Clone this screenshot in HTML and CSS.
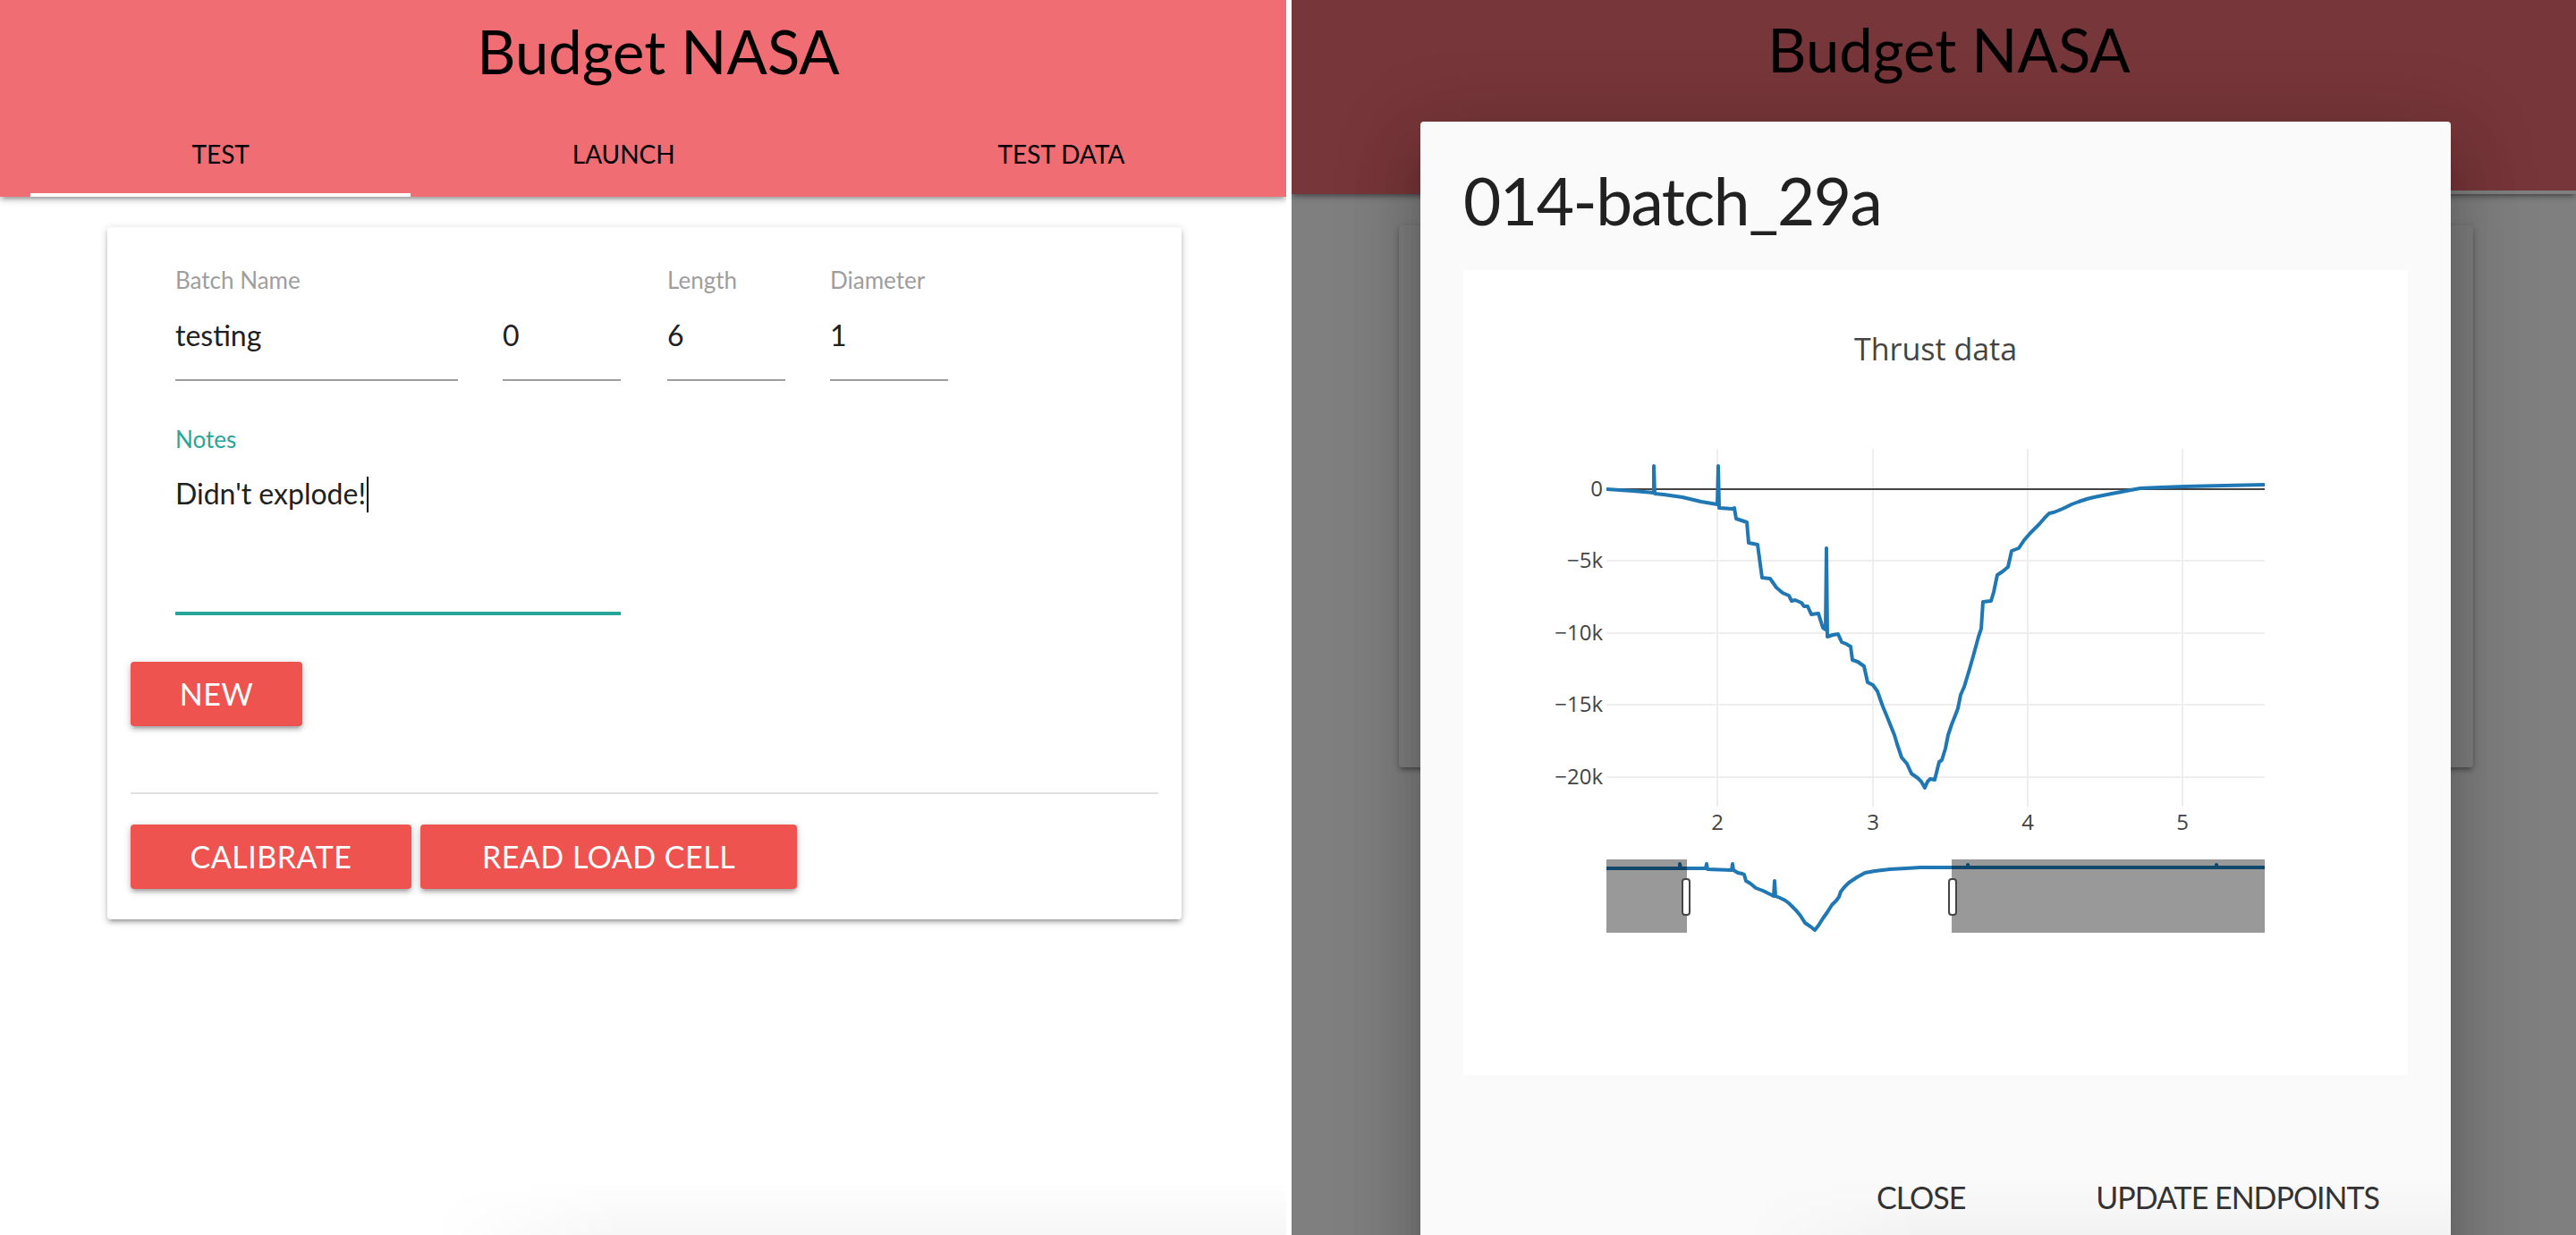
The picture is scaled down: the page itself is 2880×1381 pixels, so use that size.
FILE: index.html
```html
<!DOCTYPE html>
<html lang="en">
<head>
<meta charset="utf-8">
<title>Budget NASA</title>
<link rel="stylesheet" href="styles.css">
</head>
<body>
<div class="screens">
  <section class="panel panel-left">
    <header class="nav">
      <h1 class="brand">Budget NASA</h1>
      <ul class="tabs">
        <li class="tab active">TEST</li>
        <li class="tab">LAUNCH</li>
        <li class="tab">TEST DATA</li>
      </ul>
    </header>
    <main class="content">
      <div class="card">
        <div class="fields">
          <div class="field field-wide">
            <span class="field-label">Batch Name</span>
            <div class="field-input">testing</div>
          </div>
          <div class="field field-num">
            <span class="field-label">&nbsp;</span>
            <div class="field-input">0</div>
          </div>
          <div class="field field-num field-len">
            <span class="field-label">Length</span>
            <div class="field-input">6</div>
          </div>
          <div class="field field-num">
            <span class="field-label">Diameter</span>
            <div class="field-input">1</div>
          </div>
        </div>
        <div class="notes">
          <span class="field-label label-active">Notes</span>
          <div class="textarea">Didn't explode!<span class="caret"></span></div>
        </div>
        <div class="row-new">
          <button class="btn btn-new">NEW</button>
        </div>
        <hr class="divider">
        <div class="actions">
          <button class="btn btn-cal">CALIBRATE</button>
          <button class="btn btn-read">READ LOAD CELL</button>
        </div>
      </div>
    </main>
  </section>

  <section class="panel panel-right">
    <header class="nav nav-right">
      <h1 class="brand brand-right">Budget NASA</h1>
      <div class="tabs tabs-covered">
        <span class="tab-slot slot-1"></span>
        <span class="tab-slot slot-2"></span>
        <span class="tab-slot slot-3 active"></span>
      </div>
    </header>
    <main class="content content-right">
      <div class="card card-short"></div>
    </main>
    <div class="overlay"></div>
    <div class="modal">
      <div class="modal-content">
        <h4 class="modal-title">014-batch_29a</h4>
        <div class="chart">
          <svg class="plot" width="1056" height="900" viewBox="0 0 1056 900">
            <defs>
              <clipPath id="plotclip"><rect x="160" y="200" width="736" height="400"/></clipPath>
              <clipPath id="sliderclip"><rect x="160" y="659" width="736" height="82"/></clipPath>
            </defs>
            <text class="plot-title" x="528" y="101" text-anchor="middle">Thrust data</text>
            <g class="grid">
              <line x1="284" y1="200" x2="284" y2="600"/>
              <line x1="458" y1="200" x2="458" y2="600"/>
              <line x1="631" y1="200" x2="631" y2="600"/>
              <line x1="804" y1="200" x2="804" y2="600"/>
              <line x1="160" y1="325" x2="896" y2="325"/>
              <line x1="160" y1="406" x2="896" y2="406"/>
              <line x1="160" y1="486" x2="896" y2="486"/>
              <line x1="160" y1="567" x2="896" y2="567"/>
            </g>
            <line class="zero" x1="160" y1="245" x2="896" y2="245"/>
            <path class="trace" clip-path="url(#plotclip)" d="M160,245 L190,247 L213,249 L213,219 L214,250 L224,251 L245,254 L266,259 L284,262 L285,219 L286,266 L301,267 L303,266 L305,278 L317,282 L319,305 L329,307 L334,344 L343,345 L350,355 L357,361 L364,364 L367,370 L371,369 L378,372 L381,376 L385,376 L389,385 L397,384 L402,400 L405,402 L406,311 L407,410 L413,408 L419,407 L423,416 L428,418 L433,421 L435,436 L441,438 L448,443 L452,461 L458,464 L463,471 L469,488 L474,500 L478,510 L482,520 L485,530 L490,545 L496,552 L501,563 L508,568 L512,572 L516,579 L519,572 L522,569 L527,570 L532,550 L535,548 L539,535 L542,520 L546,508 L550,498 L553,490 L556,475 L560,466 L563,456 L566,446 L570,432 L573,421 L576,410 L579,401 L581,371 L590,370 L593,360 L597,341 L603,337 L609,332 L613,314 L621,311 L627,302 L634,294 L639,289 L644,284 L650,277 L655,272 L660,271 L665,269 L672,266 L680,262 L688,259 L697,256 L705,254 L715,252 L725,250 L736,248 L746,246 L757,244 L780,243 L806,242 L850,241 L896,240"/>
            <g class="ticks">
              <text x="156" y="253" text-anchor="end">0</text>
              <text x="156" y="333" text-anchor="end">−5k</text>
              <text x="156" y="414" text-anchor="end">−10k</text>
              <text x="156" y="494" text-anchor="end">−15k</text>
              <text x="156" y="575" text-anchor="end">−20k</text>
              <text x="284" y="626" text-anchor="middle">2</text>
              <text x="458" y="626" text-anchor="middle">3</text>
              <text x="631" y="626" text-anchor="middle">4</text>
              <text x="804" y="626" text-anchor="middle">5</text>
            </g>
            <g class="slider">
              <rect class="slider-bg" x="160" y="659" width="736" height="82"/>
              <path class="trace" clip-path="url(#sliderclip)" d="M160,669 L242,669 L242,664 L243,669 L271,669 L272,664 L273,670 L300,671 L301,664 L302,671 L307,674 L312,675 L314,676 L316,683 L321,686 L327,691 L335,694 L347,700 L348,683 L349,700 L354,702 L360,705 L364,708 L372,716 L377,722 L382,730 L388,734 L393,738 L397,733 L402,725 L407,718 L412,710 L417,705 L420,701 L422,695 L426,690 L431,685 L440,679 L449,674 L460,672 L477,670 L495,669 L511,668 L564,668 L564,665 L565,668 L842,668 L842,665 L843,668 L896,668"/>
              <rect class="mask" x="160" y="659" width="90" height="82"/>
              <rect class="mask" x="546" y="659" width="350" height="82"/>
              <rect class="handle" x="245" y="681" width="8" height="40" rx="3"/>
              <rect class="handle" x="543" y="681" width="8" height="40" rx="3"/>
            </g>
          </svg>
        </div>
      </div>
      <div class="modal-footer">
        <button class="btn-flat">CLOSE</button>
        <button class="btn-flat">UPDATE ENDPOINTS</button>
      </div>
    </div>
  </section>
</div>
</body>
</html>
```

FILE: styles.css
```css
* {
  box-sizing: border-box;
}

html,
body {
  margin: 0;
  padding: 0;
}

body {
  width: 2880px;
  height: 1381px;
  overflow: hidden;
  background: #ffffff;
  font-family: Lato, "Open Sans", sans-serif;
  color: #212121;
}

.screens {
  display: flex;
  gap: 6px;
  height: 1381px;
}

.panel {
  position: relative;
  height: 1381px;
  overflow: hidden;
  background: #ffffff;
}

.panel-left {
  width: 1438px;
}

.panel-left::after {
  content: "";
  position: absolute;
  left: 480px;
  right: 0;
  bottom: 0;
  height: 60px;
  background: linear-gradient(to bottom, rgba(0, 0, 0, 0), rgba(0, 0, 0, 0.035));
  -webkit-mask-image: linear-gradient(to right, transparent, #000 220px);
  mask-image: linear-gradient(to right, transparent, #000 220px);
}

.panel-right {
  width: 1436px;
}

/* ---------- header ---------- */
.nav {
  position: relative;
  z-index: 1;
  height: 220px;
  padding-left: 34px;
  background: #ef6d73;
  box-shadow: 0 4px 4px 0 rgba(0, 0, 0, 0.14), 0 6px 2px -4px rgba(0, 0, 0, 0.12), 0 2px 10px 0 rgba(0, 0, 0, 0.2);
}

.nav-right {
  height: 217px;
}

.brand {
  margin: 0;
  height: 124px;
  padding-top: 17px;
  font-size: 67px;
  line-height: 80px;
  font-weight: 400;
  text-align: center;
  color: #000000;
}

.brand-right {
  height: 121px;
  padding-top: 15px;
}

.tabs {
  display: flex;
  height: 96px;
  margin: 0;
  padding: 0;
  list-style: none;
}

.tab {
  flex: 1 1 auto;
  padding: 0 24px;
  text-align: center;
  font-size: 28px;
  line-height: 96px;
  color: #000000;
}

.tab.active,
.tab-slot.active {
  box-shadow: inset 0 -4px 0 #ffffff;
}

.tab-slot {
  display: block;
  height: 96px;
}

.slot-1 {
  width: 424px;
}

.slot-2 {
  width: 480px;
}

.slot-3 {
  width: 500px;
}

/* ---------- card ---------- */
.content {
  padding: 34px 0 0 120px;
}

.content-right {
  padding-top: 35px;
}

.card {
  width: 1201px;
  padding: 43px 26px 34px;
  background: #ffffff;
  border-radius: 4px;
  box-shadow: 0 4px 4px 0 rgba(0, 0, 0, 0.14), 0 6px 2px -4px rgba(0, 0, 0, 0.12), 0 2px 10px 0 rgba(0, 0, 0, 0.2);
}

.card-short {
  height: 606px;
}

.fields {
  display: flex;
  gap: 50px;
  padding: 0 50px;
}

.field-wide {
  width: 316px;
}

.field-num {
  width: 132px;
}

.field-len {
  margin-left: 2px;
}

.field-label {
  display: block;
  height: 32px;
  font-size: 26px;
  line-height: 32px;
  color: #9e9e9e;
}

.label-active {
  color: #26a69a;
}

.field-input {
  height: 73px;
  margin-top: 24px;
  border-bottom: 2px solid #9e9e9e;
  font-size: 32px;
  line-height: 44px;
  color: #212121;
}

.notes {
  width: 498px;
  margin: 49px 0 0 50px;
}

.textarea {
  height: 158px;
  margin-top: 23px;
  border-bottom: 4px solid #26a69a;
  font-size: 32px;
  line-height: 44px;
  color: #212121;
}

.caret {
  display: inline-block;
  width: 2px;
  height: 40px;
  margin-left: 1px;
  vertical-align: -9px;
  background: #000000;
}

.row-new {
  margin-top: 52px;
}

.btn {
  height: 72px;
  padding: 0;
  border: none;
  border-radius: 4px;
  background: #ef5350;
  color: #ffffff;
  font-family: inherit;
  font-size: 34px;
  line-height: 72px;
  letter-spacing: 0.5px;
  text-align: center;
  box-shadow: 0 4px 4px 0 rgba(0, 0, 0, 0.14), 0 6px 2px -4px rgba(0, 0, 0, 0.12), 0 2px 10px 0 rgba(0, 0, 0, 0.2);
}

.btn-new {
  width: 192px;
}

.btn-cal {
  width: 314px;
}

.btn-read {
  width: 421px;
}

.divider {
  height: 2px;
  margin: 74px 0 0;
  border: none;
  background: #e0e0e0;
}

.actions {
  display: flex;
  gap: 10px;
  margin-top: 34px;
}

/* ---------- modal ---------- */
.overlay {
  position: absolute;
  inset: 0;
  z-index: 2;
  background: rgba(0, 0, 0, 0.5);
}

.modal {
  position: absolute;
  z-index: 3;
  left: 144px;
  top: 136px;
  width: 1152px;
  height: 1320px;
  background: #fafafa;
  border-radius: 4px;
  box-shadow: 0 48px 76px 6px rgba(0, 0, 0, 0.14), 0 18px 92px 16px rgba(0, 0, 0, 0.12), 0 22px 30px -14px rgba(0, 0, 0, 0.2);
}

.modal::after {
  content: "";
  position: absolute;
  left: 360px;
  right: 0;
  top: 1185px;
  height: 60px;
  background: linear-gradient(to bottom, rgba(0, 0, 0, 0), rgba(0, 0, 0, 0.03));
  -webkit-mask-image: linear-gradient(to right, transparent, #000 200px);
  mask-image: linear-gradient(to right, transparent, #000 200px);
}

.modal-content {
  padding: 44px 48px 0;
}

.modal-title {
  margin: 0 0 34px;
  font-size: 73px;
  line-height: 88px;
  font-weight: 400;
  letter-spacing: -1.5px;
  color: #212121;
}

.chart {
  width: 1056px;
  height: 900px;
  background: #ffffff;
}

.plot {
  display: block;
}

.plot-title {
  font-family: "Open Sans", sans-serif;
  font-size: 34px;
  fill: #444444;
}

.grid line {
  stroke: #eeeeee;
  stroke-width: 2;
}

.zero {
  stroke: #444444;
  stroke-width: 2;
}

.trace {
  fill: none;
  stroke: #1f77b4;
  stroke-width: 4;
  stroke-linejoin: round;
}

.ticks text {
  font-family: "Open Sans", sans-serif;
  font-size: 24px;
  fill: #444444;
}

.slider-bg {
  fill: #ffffff;
}

.mask {
  fill: rgba(0, 0, 0, 0.4);
}

.handle {
  fill: #ffffff;
  stroke: #444444;
  stroke-width: 2;
}

.modal-footer {
  display: flex;
  justify-content: flex-end;
  gap: 146px;
  margin-top: 101px;
  padding-right: 80px;
}

.btn-flat {
  height: 72px;
  padding: 0;
  border: none;
  background: none;
  font-family: inherit;
  font-size: 34px;
  line-height: 72px;
  letter-spacing: -1px;
  color: #343434;
}
```
